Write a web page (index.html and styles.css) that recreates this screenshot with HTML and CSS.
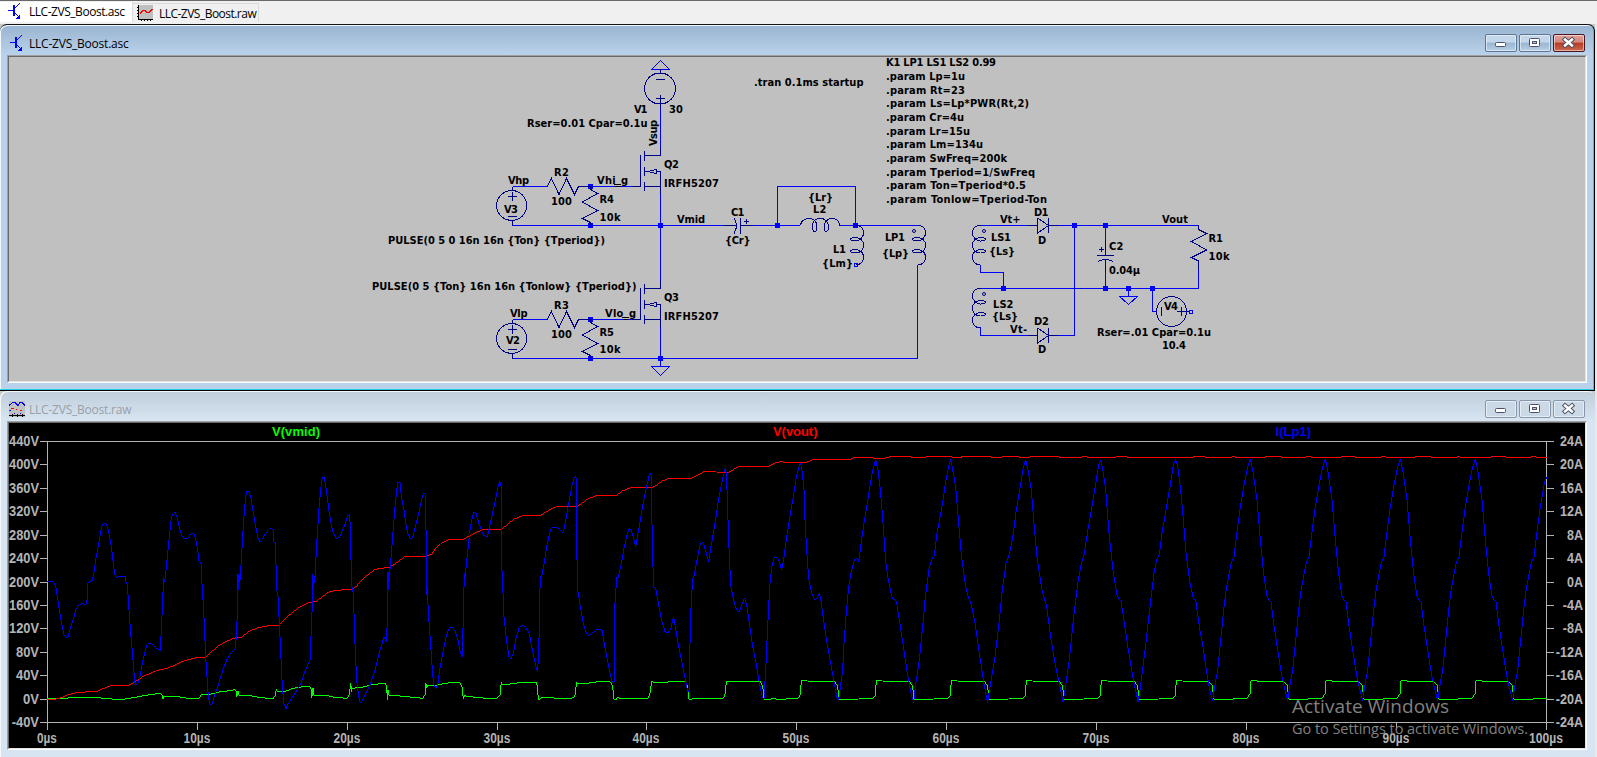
FILE: index.html
```html
<!DOCTYPE html>
<html lang="en">
<head>
<meta charset="utf-8">
<title>LLC-ZVS_Boost</title>
<link rel="stylesheet" href="styles.css">
</head>
<body>
<svg class="defs" width="0" height="0">
  <defs>
    <g id="transistor" stroke="#00f" fill="none" shape-rendering="crispEdges">
      <path d="M0 7.500H5M11.500 0.500L6 6M6 9L11 14"/>
      <path d="M6 2V13" stroke-width="2"/>
      <path d="M12.500 15.500H8L12 11Z" fill="#00f" stroke="none"/>
    </g>
    <g id="g-min"><rect x="10.5" y="8.5" width="10" height="4" rx="1" fill="#fff" stroke="#4b5266"/></g>
    <g id="g-max"><rect x="10.5" y="4.5" width="10" height="8" rx="1" fill="#fff" stroke="#4b5266"/><rect x="13.5" y="7.5" width="4" height="2" fill="#b5cbe0" stroke="#4b5266"/></g>
    <g id="g-close"><path d="M12 5.5L19 11.5M19 5.5L12 11.5" stroke="#4b5266" stroke-width="4.4" stroke-linecap="square"/><path d="M12 5.5L19 11.5M19 5.5L12 11.5" stroke="#fff" stroke-width="2.4" stroke-linecap="square"/></g>
    <g id="mosfet">
      <path class="sym" d="M632 186.5H640.5V155M644.5 151V161M644.5 167V176M644.5 182V191M644.5 155.5H660.5V148M644.5 171.5H647.5L656.5 169.5V173.5L647.5 171.5M656.5 171.5H660.5V194M644.5 186.5H660.5"/>
    </g>
    <g id="source">
      <path class="sym" d="M512.5 186.5V190.5M512.5 220.5V225.5M508 196.5H517M512.5 192V201M508 216.5H517"/>
      <circle class="sym" cx="511.7" cy="205.5" r="15"/>
      <path class="sym" d="M547 186.5L551.5 178.5L559 194.5L566.5 178.5L574.5 194.5L578.5 186.5H590"/>
      <path class="sym" d="M590.5 186V189.5L597.5 193.5L582.5 202L597.5 210.5L582.5 218.5L590.5 222.5V225"/>
    </g>
    <g id="coil">
      <path class="sym" d="M0 0C5 0 8 3 8 7.500C8 11 5 15.500 0 15.500C-3 15.500 -5 15 -5 14C-5 12.500 -3 12 0 12C5 12 8 15.500 8 19.500C8 24 5 27.500 0 27.500C-3 27.500 -5 27 -5 26C-5 24.500 -3 24 0 24C5 24 8 27.500 8 31.500C8 36 5 39.500 0 39.500"/>
    </g>
    <g id="diode">
      <path class="sym" d="M1028 225.5H1037.500M1048.500 225.5H1058M1037.500 218V233L1048.500 225.5L1037.500 218M1048.500 218V233"/>
    </g>
    <path id="cycle" d="M47 993L52 955L62 900L70 820L80 720L88 655L103 577L111 562L118 500L130 410L142 340L152 290L160 268L167 300L180 390L190 510L200 610L209 675L216 690L222 697L230 760L242 840L254 915L264 960L272 993"/>
    <path id="pulse9" d="M1 825L4 781H20L23 784H103L113 797L116 838H175L178 835H220L226 825"/>
    <path id="pulse10" d="M35 934L46 945L50 988H108L112 985H150L159 972L162 932H180L183 934H260"/>
  </defs>
</svg>

<nav class="tabs">
  <div class="tab active"><svg class="tab-icon t1" width="13" height="16"><use href="#transistor"/></svg><span class="tab-name">LLC-ZVS_Boost.asc</span></div>
  <div class="tab"><svg class="tab-icon t2" width="17" height="17" shape-rendering="crispEdges"><path fill="#c0c0c0" d="M1 0H16V14H1Z"/><path d="M1.500 0V14.500H16M0 2.500H2M0 5.500H2M0 8.500H2M0 11.500H2M4.500 14V16M7.500 14V16M10.500 14V16M13.500 14V16" stroke="#000" fill="none"/><path d="M3 8.500L6 5.500H8L10 7.500H12L15.500 4" stroke="#f00" stroke-width="1.500" fill="none"/></svg><span class="tab-name">LLC-ZVS_Boost.raw</span></div>
</nav>

<main class="workspace">
<section class="win win-active">
  <header class="title">
    <svg class="win-icon w1" width="13" height="16"><use href="#transistor"/></svg><h1 class="name">LLC-ZVS_Boost.asc</h1>
    <div class="buttons">
      <span class="btn"><svg width="30" height="16"><use href="#g-min" x="-1" y="-1"/></svg></span>
      <span class="btn"><svg width="30" height="16"><use href="#g-max" x="-1" y="-1"/></svg></span>
      <span class="btn close"><svg width="30" height="16"><use href="#g-close" x="-1" y="-1"/></svg></span>
    </div>
  </header>
  <div class="frame">
  <svg class="schematic" viewBox="9 57 1576 324" width="1576" height="324">
    <path class="wire" d="M660.500 108V148M660.500 194V281M512.500 186.500H547M590 186.500H632M512.500 319.500H547M590 319.500H632M660.500 327V366.500M512.500 225.500H724M753 225.500H800M839 225.500H918M777.500 225.500V186.500H855.500V225.500M512.500 358.500H917.500V265M980 225.500H1028M1058 225.500H1198.500M980.500 265V272.500H1003.500V288.500M980 288.500H1198.500V270M1105.500 225.500V240M1105.500 271V288.500M980.500 327V335.500H1028M1058 335.500H1074.500V225.500M1128.500 288.500V296.500M1152.500 288.500V311.500H1156"/>
    <path class="wire" d="M651.500 69.500H669.500L660.500 60.500ZM651.500 366.500H669.500L660.500 375.500ZM1119.500 296.500H1137.500L1128.500 304.500Z"/>
    <path class="node" d="M588 184h5v5h-5zM588 223h5v5h-5zM658 223h5v5h-5zM588 317h5v5h-5zM588 356h5v5h-5zM658 356h5v5h-5zM775 223h5v5h-5zM853 223h5v5h-5zM1072 223h5v5h-5zM1103 223h5v5h-5zM1001 286h5v5h-5zM1103 286h5v5h-5zM1126 286h5v5h-5zM1150 286h5v5h-5z"/>
    <path class="wire" d="M854.500 263.500h3v3h-3zM1189.500 310.500h3v3h-3z"/>
    <path class="sym" d="M660.500 69V73.500M656 79.500H665M656 98.500H665M660.500 95V108"/>
    <circle class="sym" cx="660" cy="88.500" r="15.500"/>
    <use href="#mosfet"/><use href="#mosfet" y="133"/>
    <use href="#source"/><use href="#source" y="133"/>
    <path class="sym" d="M723 225.500H736M734 218Q739 225.500 734 233.500M740.500 218V234M740 225.500H753M744 221.500H749M746.500 219V224"/>
    <path class="sym" d="M800.500 225.500C801 220 806 218.500 809 218.500C814 218.500 817 222 817 226C817 230 816 231.500 814.500 231.500C812.500 231.500 812 228 812.500 224C813.500 220 816 218.500 820 218.500C825 218.500 828 221 828.500 226C828.500 230 827.500 231.500 826 231.500C824 231.500 824 227 825 223C827 219.500 829 218.500 832 218.500C836 218.500 839.500 221 839.500 225.500"/>
    <use href="#coil" transform="translate(855.500 225.500)"/>
    <use href="#coil" transform="translate(917.500 225.500)"/>
    <use href="#coil" transform="translate(980.500 225.500) scale(-1 1)"/>
    <use href="#coil" transform="translate(980.500 288.500) scale(-1 1)"/>
    <g class="dots"><circle cx="914" cy="231" r="1.500"/><circle cx="984" cy="231" r="1.500"/><circle cx="984" cy="294" r="1.500"/></g>
    <use href="#diode"/><use href="#diode" y="110"/>
    <path class="sym" d="M1105.500 240V255.500M1097 255.500H1114M1098 261.500Q1105.500 257.500 1113 261.500M1105.500 260V272M1099 249.500H1104M1101.500 247V252"/>
    <path class="sym" d="M1198.500 225V229.500L1206.500 233.500L1191.500 241.500L1206.500 250L1191.500 257.500L1198.500 261V270"/>
    <circle class="sym" cx="1171.500" cy="311.500" r="15"/>
    <path class="sym" d="M1161.500 307V316M1177 311.500H1189M1181.500 307V316"/>
    <path class="under" d="M614 184.500H621M622 317.500H629"/>
    <g class="label">
      <text x="634" y="112.700" textLength="13.500">V1</text><text x="669" y="112.700" textLength="14">30</text>
      <text x="527" y="127" textLength="120.500">Rser=0.01 Cpar=0.1u</text>
      <text transform="translate(656.500 146) rotate(-90)" textLength="26">Vsup</text>
      <text x="664" y="167.700" textLength="15">Q2</text><text x="664" y="187" textLength="55">IRFH5207</text>
      <text x="508" y="183.700" textLength="21">Vhp</text><text x="554" y="176" textLength="15">R2</text><text x="551" y="205" textLength="21">100</text>
      <text x="597" y="183.700" textLength="31">Vhi_g</text><text x="599.500" y="202.700" textLength="14.500">R4</text><text x="599.500" y="220.700" textLength="21">10k</text><text x="504" y="212.700" textLength="14">V3</text>
      <text x="677" y="222.700" textLength="28">Vmid</text><text x="731" y="215.500" textLength="13.500">C1</text><text x="725" y="243.700" textLength="25.500">{Cr}</text>
      <text x="388" y="243.700" textLength="217">PULSE(0 5 0 16n 16n {Ton} {Tperiod})</text>
      <text x="372" y="289.700" textLength="264.500">PULSE(0 5 {Ton} 16n 16n {Tonlow} {Tperiod})</text>
      <text x="554" y="309" textLength="15">R3</text><text x="510" y="316.700" textLength="17.500">Vlp</text><text x="551" y="338" textLength="21">100</text><text x="605" y="316.700" textLength="31">Vlo_g</text>
      <text x="506" y="343.700" textLength="14">V2</text><text x="599.500" y="335.700" textLength="14.500">R5</text><text x="599.500" y="352.700" textLength="21">10k</text><text x="664" y="300.500" textLength="15">Q3</text><text x="664" y="320" textLength="55">IRFH5207</text>
      <text x="754" y="85.700" textLength="109.500">.tran 0.1ms startup</text>
      <text x="886" y="65.700" textLength="110">K1 LP1 LS1 LS2 0.99</text>
      <text x="886" y="79.700" textLength="79">.param Lp=1u</text>
      <text x="886" y="93.700" textLength="79">.param Rt=23</text>
      <text x="886" y="107" textLength="143">.param Ls=Lp*PWR(Rt,2)</text>
      <text x="886" y="121" textLength="78">.param Cr=4u</text>
      <text x="886" y="135" textLength="84">.param Lr=15u</text>
      <text x="886" y="148" textLength="97">.param Lm=134u</text>
      <text x="886" y="162" textLength="121">.param SwFreq=200k</text>
      <text x="886" y="176" textLength="149">.param Tperiod=1/SwFreq</text>
      <text x="886" y="189" textLength="140">.param Ton=Tperiod*0.5</text>
      <text x="886" y="203" textLength="161">.param Tonlow=Tperiod-Ton</text>
      <text x="808" y="200.700" textLength="25">{Lr}</text><text x="813" y="212.700" textLength="13.500">L2</text>
      <text x="833" y="252.700" textLength="13">L1</text><text x="822" y="266.700" textLength="31">{Lm}</text>
      <text x="885" y="241" textLength="20">LP1</text><text x="882" y="257.400" textLength="27">{Lp}</text>
      <text x="991" y="241" textLength="20">LS1</text><text x="989" y="254.700" textLength="26">{Ls}</text>
      <text x="1000" y="222.700" textLength="20.500">Vt+</text><text x="1034" y="215.500" textLength="14.500">D1</text><text x="1038" y="243.700">D</text>
      <text x="993" y="307.700" textLength="20.500">LS2</text><text x="992" y="319.700" textLength="26">{Ls}</text>
      <text x="1010" y="332.700" textLength="17">Vt-</text><text x="1034" y="324.700" textLength="15">D2</text><text x="1038" y="352.700">D</text>
      <text x="1109" y="249.700" textLength="14.500">C2</text><text x="1109" y="273.700" textLength="31">0.04µ</text>
      <text x="1162" y="222.700" textLength="26">Vout</text><text x="1208.500" y="241.700" textLength="14.500">R1</text><text x="1208.500" y="259.700" textLength="21">10k</text>
      <text x="1164" y="309.700" textLength="14">V4</text><text x="1097" y="335.700" textLength="114">Rser=.01 Cpar=0.1u</text><text x="1162" y="348.700" textLength="24">10.4</text>
    </g>
  </svg>
  </div>
</section>

<section class="win win-idle">
  <header class="title">
    <svg class="win-icon w2" width="16" height="16" shape-rendering="crispEdges"><rect width="16" height="16" fill="#c0c0c0"/><path d="M0 4.500L4 1.500H6L9 4.500L11 1.500H13L16 4.500" stroke="#00f" fill="none"/><path d="M2 7.500H5M7 8.500H8M11 9.500H13M0 9.500H1" stroke="#f00"/><path d="M1 9.500H2M5 12.500H6M11 12.500H12" stroke="#00f"/><path d="M0 14.500H16M3.500 13V16M8.500 13V16M13.500 13V16" stroke="#000"/></svg><h1 class="name">LLC-ZVS_Boost.raw</h1>
    <div class="buttons">
      <span class="btn"><svg width="30" height="16"><use href="#g-min" x="-1" y="-1"/></svg></span>
      <span class="btn"><svg width="30" height="16"><use href="#g-max" x="-1" y="-1"/></svg></span>
      <span class="btn"><svg width="30" height="16"><use href="#g-close" x="-1" y="-1"/></svg></span>
    </div>
  </header>
  <div class="frame">
  <svg class="plot" viewBox="9 423 1576 325" width="1576" height="325">
    <g id="axes" class="axis"></g>
    <g class="names">
      <text x="272" y="436" textLength="48" fill="#0f0">V(vmid)</text>
      <text x="773" y="436" textLength="44.500" fill="#f00">V(vout)</text>
      <text x="1275.500" y="436" textLength="35.500" fill="#00f">I(Lp1)</text>
    </g>
    <g class="trace green">
      <g transform="translate(0 370) scale(.33333)"><polyline points="142,987 162,986 175,985 205,984 255,981 290,983 335,987 370,988 400,983 430,977 478,970 487,974 489,986 491,978 540,981 570,986 597,985 605,973 635,972 660,965 690,962 703,959 709,963 710,982 714,962 716,976 755,978 780,983 820,986 826,975 829,958 832,965 855,964 880,955 915,949 930,950 934,960 935,985 939,955 941,975 980,976 1000,981 1040,985 1048,975 1052,940 1055,966 1056,955 1090,951 1115,944 1155,940 1160,950 1162,990 1164,960 1166,976 1200,977"/></g>
      <g transform="translate(400 420) scale(.33333)"><polyline points="0,829 20,830 68,835 75,825 77,788 80,803 82,797 108,797 125,792 155,787 180,789 186,800 190,838 194,826 198,829 260,835 292,835 300,825 304,785 306,795 330,792 360,788 408,787 412,797 415,838 420,838 424,832 460,832 464,835 520,834 527,820 529,785 531,790 570,789 600,784 630,785 638,797 641,838 650,838 652,832 660,835 745,835 750,820 755,784 762,788 803,787 805,784 853,784 862,795 866,838 875,838 877,835 970,835 976,820 979,784 1080,784 1088,797 1092,838 1110,838 1115,835 1133,838 1155,838 1160,835 1194,835 1200,825"/></g>
      <g transform="translate(800 420) scale(.33333)"><use href="#pulse9"/><use href="#pulse9" x="225"/><use href="#pulse9" x="450"/><use href="#pulse9" x="675"/><use href="#pulse9" x="900"/><path d="M1126 825L1129 781H1145L1148 784H1200"/></g>
      <g transform="translate(1197 370) scale(.33333)"><path d="M0 934H35"/><use href="#pulse10"/><use href="#pulse10" x="225"/><use href="#pulse10" x="450"/><use href="#pulse10" x="675"/><path d="M935 934L946 945L950 988H1008L1012 985H1049"/></g>
    </g>
    <g class="trace red">
      <g transform="translate(0 370) scale(.33333)"><polyline points="142,988 170,987 183,983 205,974 235,967 292,964 312,955 335,946 390,945 402,937 430,919 455,908 480,899 503,895 520,887 545,875 575,866 590,863 617,861 632,848 655,827 680,814 700,805 725,801 750,782 775,773 805,767 838,765 868,735 900,710 930,697 947,695 965,682 985,667 1005,661 1040,659 1052,660 1070,648 1090,625 1110,610 1125,598 1140,595 1165,593 1180,585 1200,571"/></g>
      <g transform="translate(400 420) scale(.33333)"><polyline points="0,421 12,411 20,409 82,408 95,402 105,388 122,371 148,358 190,358 207,348 225,339 250,328 305,327 315,320 342,297 370,286 422,286 440,275 455,265 472,260 533,259 548,248 565,236 588,227 650,226 665,214 695,202 757,202 770,195 785,184 805,176 875,175 890,167 912,155 947,154 950,157 985,157 1003,147 1018,139 1105,139 1120,131 1143,124 1152,127 1200,128"/></g>
      <g transform="translate(800 420) scale(.33333)"><polyline points="0,128 20,127 40,119 150,118 162,113 218,113 220,116 250,115 270,110 332,110 334,113 377,113 378,110 455,110 457,113 483,113 484,110 572,110 574,113 605,113 607,110 656,110 658,113 688,113 690,110 777,110 779,113 845,113 847,110 860,110 862,113 947,113 949,110 980,110 982,113 1176,113 1178,110 1200,110"/></g>
      <g transform="translate(1197 370) scale(.33333)"><polyline points="0,259 23,259 25,262 105,262 107,259 113,259 115,262 203,262 205,259 250,259 252,262 328,262 330,259 340,259 342,262 431,262 433,259 473,259 475,262 551,262 553,259 566,259 568,262 653,262 655,259 700,259 702,262 779,262 781,259 788,259 790,262 881,262 883,259 926,259 928,262 1001,262 1003,259 1016,259 1018,262 1049,262"/></g>
    </g>
    <g class="trace blue">
      <g transform="translate(0 370) scale(.33333)"><polyline points="142,635 158,635 163,640 168,655 175,700 181,740 187,770 192,795 198,802 204,800 210,778 220,748 228,718 235,706 245,701 257,705 262,688 264,638 276,632 281,615 287,570 297,515 302,485 307,464 313,460 319,462 325,480 334,530 340,580 344,612 349,622 355,619 376,619 378,636 382,645 387,720 393,800 400,880 404,935 408,945 415,938 421,915 427,880 435,845 442,823 448,819 455,822 480,843 483,800 486,735 491,622 494,635 498,600 508,500 514,445 519,431 525,427 531,440 540,480 546,497 552,506 564,505 570,495 577,489 583,492 590,520 597,572 603,580 606,640 611,720 617,860 621,920 625,980 631,1006 637,1000 642,980 655,945 670,895 680,870 692,848 705,838 709,800 712,730 714,612 716,660 718,618 720,630 724,570 731,450 737,380 741,364 747,364 753,385 765,460 774,505 780,515 787,508 795,493 806,479 812,475 819,478 820,515 827,518 829,650 834,680 840,800 846,930 851,1000 858,1016 864,1003 875,985 888,965 903,940 914,905 930,870 933,800 936,730 938,612 941,660 943,618 945,625 949,540 958,400 965,330 968,322 973,322 979,360 988,430 998,485 1010,506 1020,498 1032,470 1043,438 1049,434 1052,495 1054,640 1060,670 1065,820 1070,930 1076,980 1081,1000 1090,985 1108,950 1125,900 1140,840 1152,802 1160,815 1163,700 1164,605 1166,660 1168,620 1175,540 1184,420 1190,360 1194,335 1200,340"/></g>
      <g transform="translate(400 420) scale(.33333)"><polyline points="0,190 4,230 12,270 18,315 24,342 30,355 37,354 45,325 57,275 66,235 72,218 76,222 78,320 79,525 81,500 86,590 93,690 98,765 102,795 107,806 113,795 120,745 129,695 138,650 144,632 150,622 157,622 166,635 174,660 181,700 188,712 190,540 194,460 195,475 202,405 210,330 217,290 222,277 228,280 236,308 246,335 252,347 262,350 270,315 282,260 292,210 299,184 303,188 304,420 307,470 312,590 320,665 327,710 333,716 340,700 348,655 358,622 364,616 373,618 388,640 397,690 408,740 412,752 416,715 419,540 421,467 425,472 433,425 442,370 452,328 459,321 468,322 478,327 488,340 492,328 500,285 508,240 516,195 522,175 526,169 529,175 531,420 534,515 541,560 550,610 557,635 565,646 575,640 592,628 607,631 610,655 618,700 628,750 636,785 643,787 645,550 650,472 654,475 664,430 672,385 682,340 688,325 693,330 700,350 707,382 713,345 722,295 733,230 742,190 748,165 752,160 754,170 757,385 761,498 768,510 777,560 786,605 795,635 803,639 812,628 817,605 821,592 826,620 835,675 847,735 858,790 864,815 868,810 871,600 878,475 882,468 892,415 900,375 905,366 910,368 916,390 926,425 932,385 945,310 957,230 968,175 973,152 977,145 980,180 986,360 992,495 1000,535 1008,565 1017,577 1025,555 1034,533 1040,555 1048,610 1058,680 1068,730 1078,790 1087,832 1092,835 1098,730 1104,600 1109,500 1115,442 1122,415 1127,409 1136,420 1145,450 1151,420 1158,365 1168,300 1180,230 1190,165 1200,132"/></g>
      <g transform="translate(800 420) scale(.33333)"><polyline points="0,130 4,135 9,180 13,220 15,300 20,390 26,475 35,520 44,540 50,536 58,520 61,530 68,580 78,650 90,720 102,785 112,840 116,840 120,810 128,750 132,670 138,590 146,500 153,460 161,425 167,414 172,416 176,425 182,380 192,310 205,230 217,155 227,120 234,150 241,210 250,320 257,425 265,480 273,520 277,535 289,543 298,600 310,680 322,760 333,820 341,848 346,800 358,720 368,620 376,530 388,440 394,422 403,405 411,340 425,265 438,180 447,135 452,118 458,150 467,200 476,310 484,405 497,500 503,525 514,555 525,610 538,700 550,780 558,825 563,848 570,800 585,710 598,600 607,510 618,430 629,400 640,340 648,275 660,205 670,140 677,120 683,145 694,210 703,325 712,420 726,510 740,560 752,650 766,735 780,800 789,845 795,810 808,720 820,600 834,485 844,430 853,402 862,340 875,265 888,185 896,135 902,120 908,145 917,210 928,350 940,460 952,530 963,543 970,590 985,690 1000,780 1014,845 1020,810 1034,700 1050,560 1062,460 1070,420 1078,402 1086,340 1098,270 1110,200 1120,135 1127,118 1133,140 1142,210 1150,300 1158,400 1170,490 1180,535 1188,545 1195,600 1200,632"/></g>
      <g transform="translate(1197 370) scale(.33333)"><path d="M9 782L17 825L28 900L38 960L47 993"/><use href="#cycle"/><use href="#cycle" x="225"/><use href="#cycle" x="450"/><use href="#cycle" x="675"/><path d="M947 993L952 955L962 900L970 820L980 720L988 655L1003 577L1011 562L1018 500L1030 410L1042 340L1049 320"/></g>
    </g>
    <g class="watermark">
      <text x="1292" y="712.700" font-size="19" textLength="157">Activate Windows</text>
      <text x="1292" y="733.700" font-size="14.500" textLength="236">Go to Settings to activate Windows.</text>
    </g>
  </svg>
  </div>
</section>
</main>
<script src="axes.js"></script>
</body>
</html>
```
FILE: styles.css
```css
* { box-sizing: border-box; }
body {
  margin: 0;
  width: 1597px;
  height: 757px;
  overflow: hidden;
  background: #e8e8e8;
  font-family: "Open Sans", "Noto Sans", sans-serif;
  font-size: 12px;
}
svg { display: block; flex: none; }
.defs { width: 0; height: 0; position: absolute; }

.tabs {
  display: flex;
  align-items: flex-start;
  height: 24px;
  padding-top: 1px;
  border-top: 1px solid #696969;
  background: #f0f0f0;
}
.tab {
  display: flex;
  width: 126px;
  height: 19px;
  margin-top: 1px;
  border: solid #dadada;
  border-width: 1px 1px 0 0;
}
.tab.active { width: 133px; height: 20px; margin-top: 0; background: #fff; border-top: 0; }
.tab-icon.t1 { margin: 1px 0 0 8px; }
.tab-icon.t2 { margin: 1px 0 0 4px; }
.tab-name { line-height: 16px; white-space: nowrap; letter-spacing: -0.52px; margin: 2px 0 0 5px; }
.active .tab-name { margin: 2px 0 0 8px; letter-spacing: -0.46px; }

.workspace { display: flex; flex-direction: column; width: 1595px; background: #c8c8c4; }
.win { border-top: 1px solid #101418; border-radius: 7px 7px 0 0; padding: 0 8px 0 7px; }
.win-active {
  height: 367px;
  background: linear-gradient(#99b4d1 0, #b9d1ea 29px, #b9d1ea);
  border-right: 1px solid #000;
  border-bottom: 1px solid #000;
  box-shadow: inset -1px -1px #21cfe8, inset 1px 1px #f4f8fc;
}
.win-idle {
  height: 367px;
  border-top: 0;
  background: linear-gradient(#bfcddb 0, #d7e4f2 29px, #d7e4f2);
  box-shadow: inset 1px 1px #f4f8fc;
}
.title { display: flex; height: 30px; align-items: flex-start; }
.win-icon.w1 { margin: 10px 0 0 3px; }
.win-icon.w2 { margin: 10px 0 0 2px; }
.name { margin: 11px 0 0 6px; font-size: 12px; font-weight: 400; line-height: 16px; letter-spacing: -0.22px; white-space: nowrap; }
.win-idle .name { margin-left: 4px; color: #9a9fa6; }
.buttons { display: flex; gap: 2px; margin: 9px 1px 0 auto; }
.win-idle .buttons { margin-right: 2px; }
.btn {
  width: 32px;
  height: 18px;
  border: 1px solid #5c7590;
  border-radius: 2px;
  background: linear-gradient(#c3d6ea 0 45%, #9ab5cf 50%, #b8d0e6);
  box-shadow: inset 0 0 0 1px rgba(255,255,255,.5);
}
.btn.close { border-color: #4a1521; background: linear-gradient(#e0a198 0, #d4857a 45%, #b83a22 50%, #cc6a50); }
.win-idle .btn { border-color: #8795ad; background: #cbd8e6; }

.frame {
  width: 1580px;
  border: 1px solid;
  border-color: #a0a0a0 #fff #fff #a0a0a0;
}
.schematic, .plot { border: 1px solid; border-color: #696969 #e3e3e3 #e3e3e3 #696969; box-sizing: content-box; }
.schematic { background: #c0c0c0; }
.plot { background: #000; }

.wire { fill: none; stroke: #00f; shape-rendering: crispEdges; }
.sym { fill: none; stroke: #000084; shape-rendering: crispEdges; }
.dots { fill: none; stroke: #000084; }
.under { stroke: #000; shape-rendering: crispEdges; }
.node { fill: #00f; }
.label { font: bold 11px "DejaVu Sans Condensed", "DejaVu Sans", sans-serif; }
text { white-space: pre; }

.axis path { stroke: #b4b4b4; fill: none; shape-rendering: crispEdges; }
.axis text { fill: #b4b4b4; font: bold 14px "Liberation Sans", Arial, sans-serif; }
.names { font: bold 13px "Liberation Sans", Arial, sans-serif; }
.trace { fill: none; stroke-width: 3; shape-rendering: crispEdges; }
.green { stroke: #0f0; }
.red { stroke: #f00; }
.blue { stroke: #00f; }
.watermark { fill: #808080; font-family: "Open Sans", "Noto Sans", sans-serif; }
```
FILE: axes.js
```js
// Builds the plot frame, tick marks and tick labels.
(function () {
  var NS = "http://www.w3.org/2000/svg";
  var g = document.getElementById("axes");
  var d = "M40 441.5H1554M40 722.5H1554M47.5 441V730M1546.5 441V730";
  function label(s, x, y, anchor, width) {
    var t = document.createElementNS(NS, "text");
    t.setAttribute("x", x);
    t.setAttribute("y", y);
    t.setAttribute("text-anchor", anchor);
    t.setAttribute("textLength", width);
    t.setAttribute("lengthAdjust", "spacingAndGlyphs");
    t.textContent = s;
    g.appendChild(t);
  }
  function measure(s) {
    var w = 0;
    for (var i = 0; i < s.length; i++) {
      w += { "-": 4.3, V: 9, A: 9, "µ": 7.5, s: 6.3 }[s[i]] || 7;
    }
    return w;
  }
  for (var i = 0; i <= 12; i++) {
    var y = Math.round(441 + i * 23.42);
    d += "M40 " + (y + .5) + "H47M1547 " + (y + .5) + "H1554";
    var v = 440 - 40 * i + "V", a = 24 - 4 * i + "A";
    label(v, 39, y + 5, "end", measure(v));
    label(a, 1583, y + 5, "end", measure(a));
  }
  for (var k = 0; k <= 10; k++) {
    var x = Math.floor(47.3 + k * 149.9);
    d += "M" + (x + .5) + " 722V730";
    var s = k * 10 + "µs";
    label(s, x, 743, "middle", measure(s) - 1);
  }
  var p = document.createElementNS(NS, "path");
  p.setAttribute("d", d);
  g.appendChild(p);
})();
```
